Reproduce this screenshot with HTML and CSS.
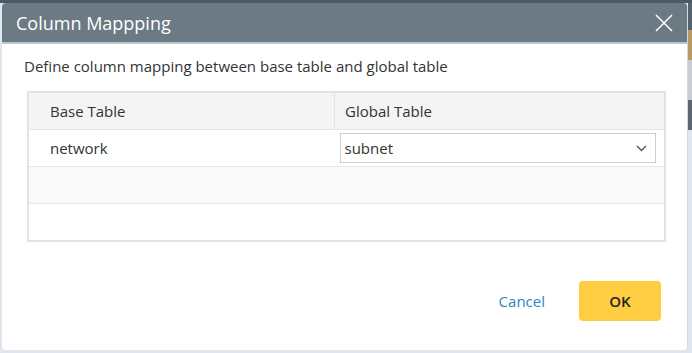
FILE: index.html
```html
<!DOCTYPE html>
<html lang="en">
<head>
  <meta charset="UTF-8">
  <meta name="viewport" content="width=device-width, initial-scale=1.0">
  <title>column mapping</title>
  <link rel="stylesheet" href="styles.css">
</head>
<body>
  <div class="dialog">
    <div class="dialog-header">
      <h2>Column Mappping</h2>
      <button class="close" aria-label="close">
        <svg width="18" height="18" viewBox="0 0 18 18"><path d="M1 1L17 17M17 1L1 17" stroke="#fff" stroke-width="1.5" fill="none"/></svg>
      </button>
    </div>
    <div class="dialog-body">
      <p class="desc">Define column mapping between base table and global table</p>
      <table class="mapping">
        <thead>
          <tr><th>Base Table</th><th>Global Table</th></tr>
        </thead>
        <tbody>
          <tr>
            <td>network</td>
            <td class="pick">
              <div class="select">
                <span>subnet</span>
                <svg width="11" height="7" viewBox="0 0 11 7"><path d="M1 1L5.5 5.5L10 1" stroke="#555" stroke-width="1.4" fill="none"/></svg>
              </div>
            </td>
          </tr>
          <tr class="alt"><td></td><td></td></tr>
          <tr><td></td><td></td></tr>
        </tbody>
      </table>
    </div>
    <div class="dialog-footer">
      <button class="cancel">Cancel</button>
      <button class="ok">OK</button>
    </div>
  </div>
</body>
</html>
```

FILE: styles.css
```css
html, body{
  margin: 0;
  height: 100%;
}
body{
  font-family: "Open Sans", "Noto Sans", sans-serif;
  background:
    linear-gradient(to bottom, #4b5a67 0 3px, transparent 3px),
    linear-gradient(to bottom, #56646f 0 30px, #b89a66 30px 60px, #c9ccd3 60px 100px, #5d6670 100px 130px, transparent 130px) right top / 4px 100% no-repeat,
    #e2e6ef;
  overflow: hidden;
}
.dialog{
  position: relative;
  margin: 3px 4px 0 2px;
  height: 347px;
  background: white;
  border-radius: 4px;
  border-right: 1px solid #d6d9de;
  box-sizing: border-box;
  display: flex;
  flex-direction: column;
  overflow: hidden;
}
.dialog-header{
  height: 39px;
  background: #6b7a83;
  border-bottom: 2px solid #bcc5cd;
  display: flex;
  align-items: center;
  justify-content: space-between;
  padding: 0 16px 0 14px;
}
.dialog-header h2{
  margin: 0;
  font-size: 18px;
  font-weight: 400;
  color: white;
}
.close{
  background: none;
  border: 0;
  padding: 0;
  margin-right: -2px;
  display: flex;
}
.dialog-body{
  padding: 12px 22px 0 25px;
  flex: 1;
}
.desc{
  margin: 0 0 15px -3px;
  font-size: 15px;
  color: #333;
  line-height: 20px;
}
.mapping{
  width: 639px;
  border-collapse: collapse;
  border: 2px solid #e3e3e3;
  font-size: 15px;
  color: #333;
}
.mapping th, .mapping td{
  height: 36px;
  padding: 0 0 0 21px;
  text-align: left;
  font-weight: 400;
  border-bottom: 1px solid #e6e6e6;
}
.mapping th{
  background: #f4f4f4;
}
.mapping th:first-child{
  width: 284px;
  border-right: 1px solid #e3e3e3;
}
.mapping th:last-child{
  padding-left: 10px;
}
.mapping td.pick{
  padding: 0 8px 0 5px;
}
.mapping tr.alt td{
  background: #fafafa;
}
.select{
  height: 28px;
  border: 1px solid #cfcfcf;
  display: flex;
  align-items: center;
  justify-content: space-between;
  padding: 0 8px 0 4px;
}
.dialog-footer{
  display: flex;
  justify-content: flex-end;
  align-items: center;
  gap: 34px;
  padding: 0 26px 29px 0;
}
.dialog-footer button{
  font-family: inherit;
  font-size: 15px;
  border: 0;
  cursor: pointer;
}
.cancel{
  background: none;
  color: #2b88c0;
  padding: 0;
}
.ok{
  width: 82px;
  height: 40px;
  background: #ffcd42;
  color: #222;
  font-weight: 600;
  border-radius: 4px;
}
```
